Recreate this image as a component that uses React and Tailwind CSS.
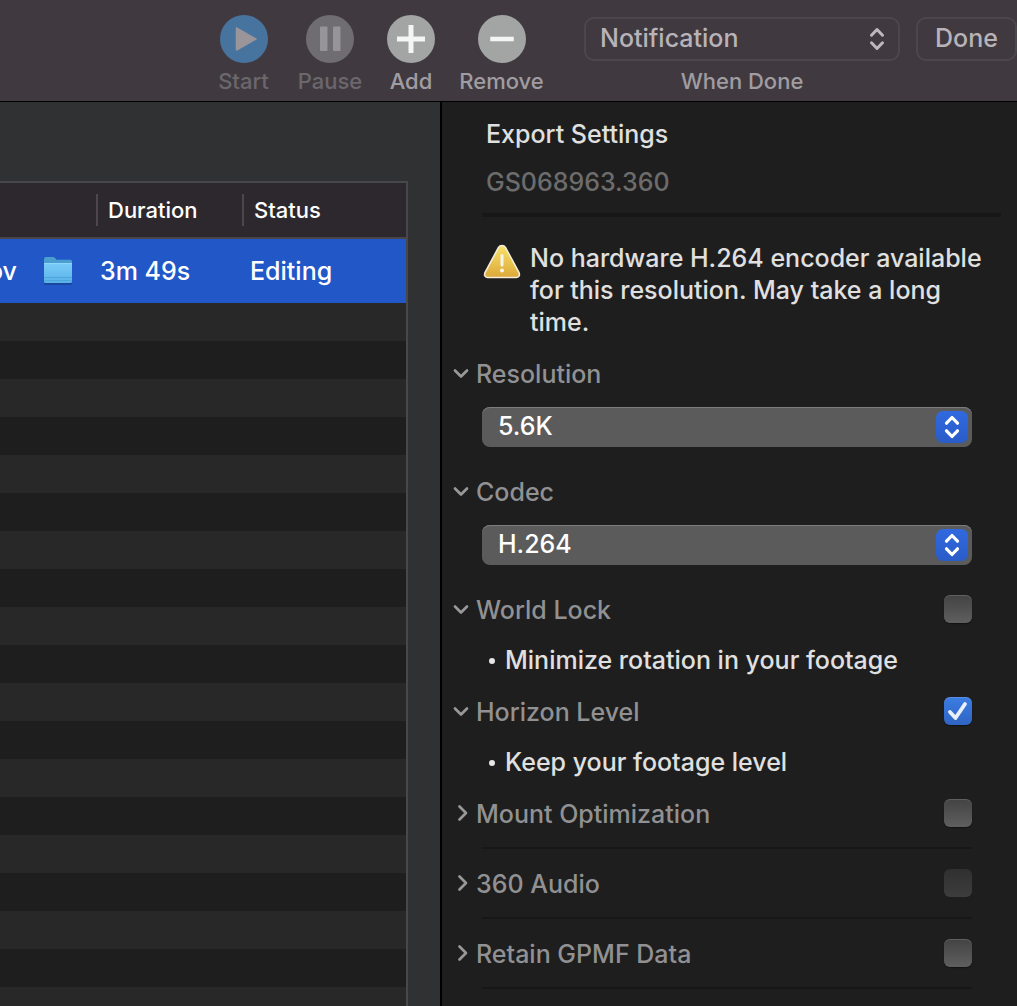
import React from "react";

const FONT = "font-['Inter','Liberation_Sans',sans-serif]";

function ToolButton({ label, circle, dim, width, children }) {
  return (
    <button className={`flex flex-col items-center ${width}`} disabled={dim}>
      <span className={`flex size-12 items-center justify-center rounded-full ${circle}`}>
        <svg viewBox="0 0 48 48" className="size-12" aria-hidden="true">{children}</svg>
      </span>
      <span className={`mt-1 text-[22px] leading-7 font-medium whitespace-nowrap ${dim ? "text-[#6b676d]" : "text-[#a09da2]"}`}>
        {label}
      </span>
    </button>
  );
}

function UpDown({ className, stroke, width }) {
  return (
    <svg viewBox="0 0 32 32" className={className} fill="none" stroke={stroke} strokeWidth={width} strokeLinecap="round" strokeLinejoin="round" aria-hidden="true">
      <path d="M10.500 12.200 L16 6.500 L21.500 12.200 M10.500 19.800 L16 25.500 L21.500 19.800" />
    </svg>
  );
}

function Chevron({ open }) {
  return (
    <svg viewBox="0 0 20 20" className="size-5 shrink-0" fill="none" stroke="#98989a" strokeWidth="2.7" strokeLinecap="round" strokeLinejoin="round" aria-hidden="true">
      {open ? <path d="M3 6.500 L9 12.500 L15 6.500" /> : <path d="M7.500 2.500 L14 9 L7.500 15.500" />}
    </svg>
  );
}

function SectionHead({ title, open, box, checked, dim }) {
  const id = title.toLowerCase().replace(/ /g, "-");
  return (
    <div className="flex h-8 items-start pr-[45px] pl-[10px]">
      <button className="flex items-center gap-1 text-[25px] leading-8 font-medium text-[#919193]" aria-expanded={!!open}>
        <Chevron open={open} />
        <span id={id} className="whitespace-nowrap">{title}</span>
      </button>
      {box && (
        <span className="relative mt-px ml-auto flex">
          <input
            type="checkbox"
            aria-labelledby={id}
            defaultChecked={checked}
            disabled={dim}
            className="peer size-7 appearance-none rounded-md bg-linear-to-b from-[#434343] to-[#5f5f5f] shadow-[inset_0_1px_0_rgba(255,255,255,0.15),0_1px_1px_rgba(0,0,0,0.4)] checked:from-[#3c7ce2] checked:to-[#2f65c4] disabled:from-[#303030] disabled:to-[#3d3d3d] disabled:shadow-none"
          />
          <svg viewBox="0 0 28 28" className="pointer-events-none absolute inset-0 hidden size-7 peer-checked:block" fill="none" stroke="#e9f0fc" strokeWidth="3.8" strokeLinecap="round" strokeLinejoin="round" aria-hidden="true">
            <path d="M6 15 L11.500 21 L21 7" />
          </svg>
        </span>
      )}
    </div>
  );
}

function Dropdown({ label, value }) {
  return (
    <div className="relative mt-[17px] mr-[45px] mb-[29px] ml-10">
      <select aria-label={label} className="block h-10 w-full appearance-none rounded-lg bg-[#5b5b5b] pb-0.5 pl-4 text-[25px] leading-8 font-medium text-white shadow-[inset_0_1px_0_#7d7d7d]">
        <option>{value}</option>
      </select>
      <span className="pointer-events-none absolute top-1 right-1 size-8 rounded-[7px] bg-linear-to-b from-[#3069e0] to-[#2a5cc8]">
        <UpDown className="size-8" stroke="#ffffff" width="3.2" />
      </span>
    </div>
  );
}

function Bullet({ children }) {
  return (
    <ul className="mt-[18px] mb-5 pl-[47px]">
      <li className="flex items-center gap-[10px] text-[25px] leading-8 font-medium text-[#e0e0e0]">
        <span className="mt-0.5 size-[6px] rounded-full bg-[#e6e6e6]" />
        {children}
      </li>
    </ul>
  );
}

function Rule() {
  return <hr className="mt-[17px] mr-[45px] mb-[19px] ml-10 h-0.5 border-0 bg-[#171717]" />;
}

export default function App() {
  return (
    <div className={`flex h-screen flex-col overflow-hidden bg-[#1e1e1e] ${FONT}`}>
      <header className="flex items-start justify-end border-b border-black bg-[#403a40] pt-[15px] pb-[6px]">
        <div className="mr-[41px] flex gap-7">
          <ToolButton label="Start" circle="bg-[#47749f]" dim width="w-[53px]">
            <path d="M16.500 13 L36 24 L16.500 35 Z" fill="#999599" stroke="#999599" strokeWidth="1.500" strokeLinejoin="round" />
          </ToolButton>
          <ToolButton label="Pause" circle="bg-[#706d72]" dim width="w-[64px]">
            <path d="M15 12.500h5.500v22.500h-5.500z M28 12.500h5.500v22.500H28z" fill="#969498" stroke="#969498" strokeWidth="2" strokeLinejoin="round" />
          </ToolButton>
          <ToolButton label="Add" circle="bg-[#a2a5a3]" width="w-[42px]">
            <path d="M12.500 24h23M24 12.500v23" stroke="#f4f6f5" strokeWidth="5" strokeLinecap="square" />
          </ToolButton>
          <ToolButton label="Remove" circle="bg-[#a2a5a3]" width="w-[83px]">
            <path d="M14.500 24h19" stroke="#f4f6f5" strokeWidth="4.500" strokeLinecap="square" />
          </ToolButton>
        </div>
        <div className="mt-0.5 flex w-[316px] flex-col items-center">
          <div className="relative w-full">
            <select id="when-done" className="block h-11 w-full appearance-none rounded-[10px] border-2 border-[#4c474d] bg-transparent pb-0.5 pl-[14px] text-[25px] leading-8 font-medium text-[#b8b3b9]">
              <option>Notification</option>
            </select>
            <UpDown className="pointer-events-none absolute top-[6px] right-[7px] size-8" stroke="#bdb8be" width="3" />
          </div>
          <label htmlFor="when-done" className="mt-[6px] text-[22px] leading-7 font-medium text-[#a09da2]">When Done</label>
        </div>
        <button className="mt-0.5 ml-4 h-11 w-[101px] shrink-0 rounded-[10px] border-2 border-[#4c474d] pb-0.5 text-[25px] leading-8 font-medium text-[#b8b3b9]">
          Done
        </button>
      </header>

      <div className="flex min-h-0 flex-1">
        <main className="flex min-w-0 flex-1 flex-col bg-[#303133] pt-[79px] pr-8">
          <div className="flex flex-1 flex-col border-t-2 border-r-2 border-[#48484a] bg-[#1e1e1e]">
            <table className="w-full table-fixed border-separate border-spacing-0 text-left text-white">
              <colgroup>
                <col className="w-24" />
                <col className="w-[146px]" />
                <col />
              </colgroup>
              <thead>
                <tr className="bg-[#2d282d] text-[22px] leading-8">
                  <td className="h-14 border-b-2 border-[#48464a] p-0" />
                  <th scope="col" className="h-14 border-b-2 border-[#48464a] p-0 font-medium">
                    <div className="border-l-2 border-[#4b474c] pl-[10px]">Duration</div>
                  </th>
                  <th scope="col" className="h-14 border-b-2 border-[#48464a] p-0 font-medium">
                    <div className="border-l-2 border-[#4b474c] pl-[10px]">Status</div>
                  </th>
                </tr>
              </thead>
              <tbody>
                <tr className="h-16 bg-[#2257c8] text-[25px] leading-8 font-medium">
                  <td className="p-0">
                    <div className="flex items-center gap-[26px]">
                      <span className="flex w-[17px] justify-end overflow-hidden">ov</span>
                      <svg viewBox="0 0 30 30" className="size-[30px] shrink-0" aria-label="Folder">
                        <defs>
                          <linearGradient id="folder" x1="0" y1="0" x2="0" y2="1">
                            <stop offset="0" stopColor="#7bcdf8" />
                            <stop offset="1" stopColor="#58b1e8" />
                          </linearGradient>
                        </defs>
                        <rect x="1" y="6" width="28" height="23" rx="1.500" fill="#1b479f" />
                        <path d="M1 3 Q1 1 3 1 H10 Q11.500 1 12.500 2.500 L13.500 3.800 H27.500 Q29 3.800 29 5.500 V14 H1 Z" fill="#4a9fcf" />
                        <path d="M1 7 H29 V25.500 Q29 27 27.500 27 H2.500 Q1 27 1 25.500 Z" fill="url(#folder)" />
                        <path d="M1 7.500 H29" stroke="#8bd6fa" />
                        <path d="M1 21.500 H29 M1 24.500 H29" stroke="#4fa6dc" />
                      </svg>
                    </div>
                  </td>
                  <td className="p-0 pl-1">3m 49s</td>
                  <td className="p-0 pl-2">Editing</td>
                </tr>
              </tbody>
            </table>
            <div className="flex-1 bg-[repeating-linear-gradient(to_bottom,#282828_0px,#282828_38px,#1e1e1e_38px,#1e1e1e_76px)]" />
          </div>
        </main>

        <aside className="w-[577px] shrink-0 border-l-2 border-black bg-[#1e1e1e] pt-4">
          <h2 className="pl-[44px] text-[25px] leading-8 font-medium text-[#e0e0e0]">Export Settings</h2>
          <p className="mt-4 pl-[44px] text-[25px] leading-8 font-medium text-[#6c6c6c]">GS068963.360</p>
          <hr className="mt-[15px] mr-4 ml-10 h-1 border-0 bg-[#171717]" />
          <div className="mt-[25px] mb-5 flex items-start gap-2 pr-4 pl-10">
            <svg viewBox="0 0 40 40" className="size-10 shrink-0" aria-label="Warning">
              <defs>
                <linearGradient id="warning" x1="0" y1="0" x2="0" y2="1">
                  <stop offset="0" stopColor="#f9e268" />
                  <stop offset="1" stopColor="#dba83a" />
                </linearGradient>
              </defs>
              <path d="M20 3.500 Q22.300 3.500 23.500 5.500 L37 30.500 Q38.500 35 34.500 35.500 H5.500 Q1.500 35 3 30.500 L16.500 5.500 Q17.700 3.500 20 3.500 Z" fill="url(#warning)" stroke="#f3ecd6" strokeWidth="1.600" />
              <path d="M20 13.500 V23" stroke="#f8f4e8" strokeWidth="3" strokeLinecap="round" />
              <circle cx="20" cy="28.500" r="2" fill="#f8f4e8" />
            </svg>
            <p className="text-[25px] leading-8 font-medium text-[#e0e0e0]">
              No hardware H.264 encoder available for this resolution. May take a long time.
            </p>
          </div>

          <SectionHead title="Resolution" open />
          <Dropdown label="Resolution" value="5.6K" />
          <SectionHead title="Codec" open />
          <Dropdown label="Codec" value="H.264" />
          <SectionHead title="World Lock" open box />
          <Bullet>Minimize rotation in your footage</Bullet>
          <SectionHead title="Horizon Level" open box checked />
          <Bullet>Keep your footage level</Bullet>
          <SectionHead title="Mount Optimization" box />
          <Rule />
          <SectionHead title="360 Audio" box dim />
          <Rule />
          <SectionHead title="Retain GPMF Data" box />
          <Rule />
        </aside>
      </div>
    </div>
  );
}
